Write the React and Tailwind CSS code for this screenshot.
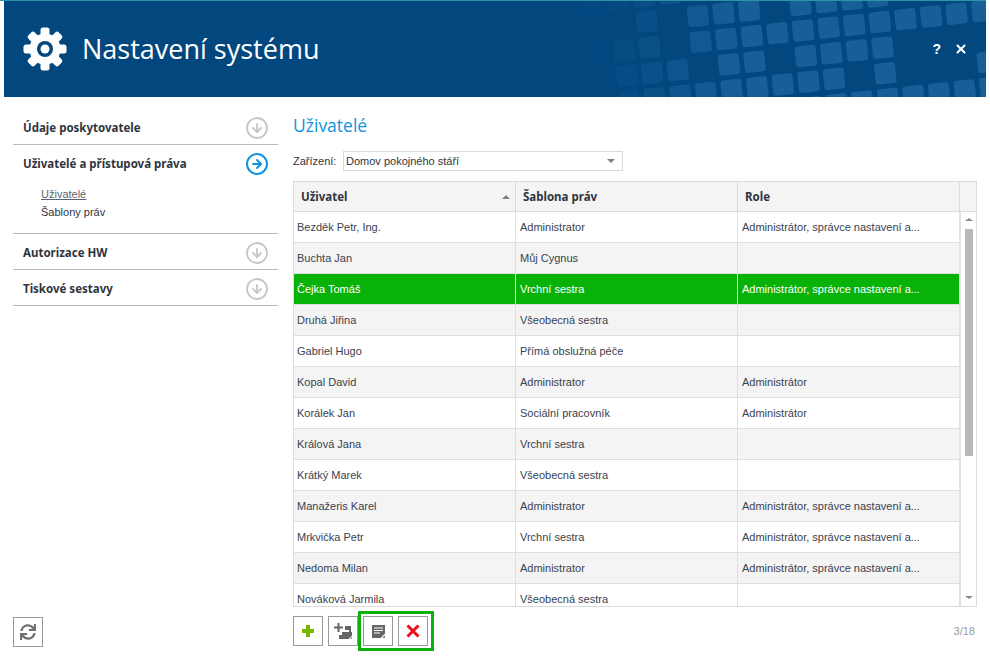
import { CircleArrowDown, CircleArrowRight, X } from 'lucide-react';
import { FaSync } from 'react-icons/fa';

const users = [
  ['Bezděk Petr, Ing.', 'Administrator', 'Administrátor, správce nastavení a...'],
  ['Buchta Jan', 'Můj Cygnus', ''],
  ['Čejka Tomáš', 'Vrchní sestra', 'Administrátor, správce nastavení a...'],
  ['Druhá Jiřina', 'Všeobecná sestra', ''],
  ['Gabriel Hugo', 'Přímá obslužná péče', ''],
  ['Kopal David', 'Administrator', 'Administrátor'],
  ['Korálek Jan', 'Sociální pracovník', 'Administrátor'],
  ['Králová Jana', 'Vrchní sestra', ''],
  ['Krátký Marek', 'Všeobecná sestra', ''],
  ['Manažeris Karel', 'Administrator', 'Administrátor, správce nastavení a...'],
  ['Mrkvička Petr', 'Vrchní sestra', 'Administrátor, správce nastavení a...'],
  ['Nedoma Milan', 'Administrator', 'Administrátor, správce nastavení a...'],
  ['Nováková Jarmila', 'Všeobecná sestra', ''],
];

// header pattern: lattice cells [row, columns]
const cells = [
  [-2, [-4, -3, -2, -1]],
  [-1, [-2, 0, 1, 2, 4, 5, 6, 7]],
  [0, [-4, -3, -2, 0, 1, 2, 3, 4, 5, 6, 7, 8, 9, 10, 11]],
  [1, [-3, -2, -1, 1, 2, 4, 5, 6, 7]],
  [2, [-3, -2, -1, 0, 1, 2, 3, 4, 5, 7, 11]],
  [3, [3, 4, 5, 6, 7, 8, 9, 10, 11]],
];

const HeaderPattern = () => (
  <svg className="absolute inset-0" width="982" height="96" viewBox="4 1 982 96">
    {cells.flatMap(([j, cols]) =>
      cols.map((i) => {
        const x = 700.7 + 25.6 * i + 2.7 * j;
        const y = 41.7 - 2.8 * i + 25.6 * j;
        const o = Math.max(0.08, Math.min(1, (x - 595) / 140));
        return (
          <rect
            key={`${i}-${j}`}
            x={x - 10.5}
            y={y - 10.5}
            width="21"
            height="21"
            rx="3"
            fill="#175f98"
            fillOpacity={o}
            transform={`rotate(-6 ${x} ${y})`}
          />
        );
      })
    )}
  </svg>
);

const Gear = () => (
  <svg width="44" height="44" viewBox="-22 -22 44 44">
    {[0, 45, 90, 135, 180, 225, 270, 315].map((a) => (
      <rect key={a} x="-4.5" y="-21.5" width="9" height="12" rx="2.5" fill="#fff" transform={`rotate(${a})`} />
    ))}
    <circle r="15.5" fill="#fff" />
    <circle r="8" fill="#02487f" />
    <circle r="4.5" fill="#fff" />
  </svg>
);

const SideItem = ({ title, active, children }) => (
  <div className="border-b border-[#b9b9b9]">
    <div className="flex items-center justify-between h-[30px] mt-1 mb-px pl-[10px] pr-[9px]">
      <span className="font-bold text-[11.5px] font-['Noto_Sans',sans-serif] text-[#2f3540]">{title}</span>
      {active ? (
        <CircleArrowRight size={24} strokeWidth={2} className="text-[#0f94dd]" />
      ) : (
        <CircleArrowDown size={24} strokeWidth={1.8} className="text-[#c6c6c6]" />
      )}
    </div>
    {children}
  </div>
);

const ToolButton = ({ children }) => (
  <button className="w-[30px] h-[30px] flex items-center justify-center border border-[#999] bg-white">
    {children}
  </button>
);

const UserRow = ({ user, index }) => {
  const selected = index === 2;
  const bg = selected ? 'bg-[#08b208] text-white' : index % 2 ? 'bg-[#f4f4f4] text-[#3a4250]' : 'bg-white text-[#3a4250]';
  return (
    <div className={`flex shrink-0 h-[31px] border-b border-[#dfdfdf] ${bg}`}>
      <div className={`w-[222px] pl-[3px] flex items-center border-r ${selected ? 'border-[#dfe9df]' : 'border-[#dfdfdf]'}`}>{user[0]}</div>
      <div className={`w-[222px] pl-[4px] flex items-center border-r ${selected ? 'border-[#dfe9df]' : 'border-[#dfdfdf]'}`}>{user[1]}</div>
      <div className="flex-1 pl-[4px] flex items-center">{user[2]}</div>
    </div>
  );
};

export default function App() {
  return (
    <div className="w-[990px] h-[658px] bg-white flex flex-col overflow-hidden text-[11px] text-[#2f3540] font-['Liberation_Sans',sans-serif]">
      <div className="w-[986px] h-px shrink-0 bg-[#2f93a8]" />
      <header className="relative ml-1 w-[982px] h-24 shrink-0 bg-[#02487f] overflow-hidden">
        <HeaderPattern />
        <div className="relative flex items-center h-full pl-[19px] pr-[18px]">
          <Gear />
          <h1 className="ml-[15px] mt-px text-[27px] text-white font-['Open_Sans',sans-serif]">Nastavení systému</h1>
          <div className="ml-auto flex items-center gap-[13px] text-white">
            <span className="text-[14px] font-bold">?</span>
            <X size={14} strokeWidth={3.5} />
          </div>
        </div>
      </header>

      <div className="flex flex-1 min-h-0">
        <aside className="w-[265px] shrink-0 ml-[13px] mr-[15px] pt-3 flex flex-col">
          <SideItem title="Údaje poskytovatele" />
          <SideItem title="Uživatelé a přístupová práva" active>
            <div className="pl-[28px] pt-[5px] pb-[12px]">
              <div className="h-[18px] leading-[18px] underline text-[#5b6475]">Uživatelé</div>
              <div className="h-[18px] leading-[18px]">Šablony práv</div>
            </div>
          </SideItem>
          <SideItem title="Autorizace HW" />
          <SideItem title="Tiskové sestavy" />
          <button className="mt-auto mb-[11px] w-[30px] h-[30px] flex items-center justify-center border border-[#999]">
            <FaSync size={16} className="text-[#707070]" />
          </button>
        </aside>

        <main className="w-[684px] shrink-0 flex flex-col">
          <h2 className="mt-[14px] h-7 leading-7 text-[17.5px] text-[#0f94dd] font-['Open_Sans',sans-serif]">Uživatelé</h2>
          <div className="mt-[12px] flex items-center h-5">
            <span className="w-[50px]">Zařízení:</span>
            <div className="w-[280px] h-5 flex items-center justify-between pl-[2px] pr-[7px] border border-[#d9d9d9]">
              <span>Domov pokojného stáří</span>
              <span className="w-0 h-0 border-x-[4px] border-x-transparent border-t-[4px] border-t-[#808080]" />
            </div>
          </div>

          <div className="mt-[10px] h-[426px] flex flex-col border border-[#dcdcdc] overflow-hidden">
            <div className="flex shrink-0 h-[30px] bg-[#f4f4f4] border-b border-[#dcdcdc] font-bold text-[11.5px] font-['Noto_Sans',sans-serif] text-[#2f3540]">
              <div className="w-[222px] pl-[7px] pr-[5px] flex items-center justify-between border-r border-[#dcdcdc]">
                <span>Uživatel</span>
                <span className="w-0 h-0 border-x-[4px] border-x-transparent border-b-[4px] border-b-[#808080]" />
              </div>
              <div className="w-[222px] pl-[7px] flex items-center border-r border-[#dcdcdc]">Šablona práv</div>
              <div className="flex-1 pl-[7px] flex items-center border-r border-[#dcdcdc]">Role</div>
              <div className="w-[16px]" />
            </div>
            <div className="flex flex-1 min-h-0">
              <div className="flex-1 min-w-0 flex flex-col overflow-hidden">
                {users.map((user, i) => (
                  <UserRow key={user[0]} user={user} index={i} />
                ))}
              </div>
              <div className="w-[17px] shrink-0 border-l-2 border-[#e2e2e2] flex flex-col items-center pt-[6px] pb-[7px]">
                <span className="w-0 h-0 border-x-[4px] border-x-transparent border-b-[3px] border-b-[#888]" />
                <div className="mt-[8px] w-2 h-[227px] bg-[#b8b8b8]" />
                <span className="mt-auto w-0 h-0 border-x-[4px] border-x-transparent border-t-[3px] border-t-[#888]" />
              </div>
            </div>
          </div>

          <div className="mt-[9px] h-[30px] flex items-center justify-between">
            <div className="flex items-center">
              <div className="flex gap-[5px]">
                <ToolButton>
                  <svg width="12" height="12" viewBox="0 0 12 12">
                    <path d="M4 0h4v4h4v4H8v4H4V8H0V4h4z" fill="#76b900" />
                  </svg>
                </ToolButton>
                <ToolButton>
                  <svg width="18" height="16" viewBox="0 0 18 16">
                    <path d="M3.500 0h2v3.500H9v2H5.500V9h-2V5.500H0v-2h3.500z" fill="#666" />
                    <path d="M11 3h6v4h-6zM15 7h2v2h-2zM8 9h10v3.500L14.500 16H5v-4h3z" fill="#666" />
                    <path d="M18 13v3h-2.500z" fill="#aaa" />
                  </svg>
                </ToolButton>
              </div>
              <div className="-my-[6px] flex gap-[5px] pl-[2px] pr-[3px] py-[2px] border-[3px] border-[#0db00d]">
                <ToolButton>
                  <svg width="13" height="13" viewBox="0 0 13 13">
                    <path d="M0 0h13v8.500L8.500 13H0z" fill="#666" />
                    <path d="M2 2.500h9v1H2zM2 5h9v1H2zM2 7.500h6v1H2z" fill="#fff" />
                    <path d="M13 10v3h-3z" fill="#888" />
                  </svg>
                </ToolButton>
                <ToolButton>
                  <svg width="14" height="14" viewBox="0 0 14 14">
                    <path d="M1.500 1.500l11 11M12.500 1.500l-11 11" stroke="#e8101c" strokeWidth="3" />
                  </svg>
                </ToolButton>
              </div>
            </div>
            <span className="pr-[2px] text-[#9a9a9a]">3/18</span>
          </div>
        </main>
      </div>
    </div>
  );
}
